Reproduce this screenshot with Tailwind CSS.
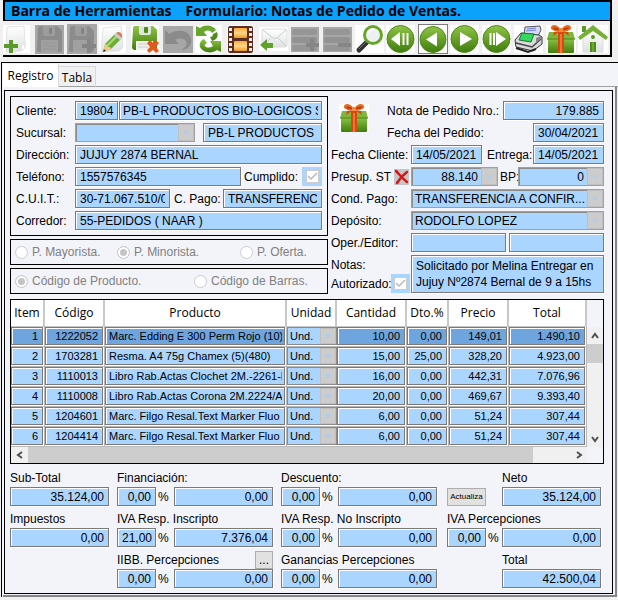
<!DOCTYPE html>
<html lang="es">
<head>
  <meta charset="UTF-8">
  <meta name="viewport" content="width=device-width, initial-scale=1.0">
  <title>Notas de Pedido de Ventas</title>
  <script src="https://cdn.jsdelivr.net/npm/@tailwindcss/browser@4"></script>
</head>
<body class="bg-[#f0f0f0] font-['Liberation_Sans',Arial,sans-serif] text-[12px] leading-4 text-black">

  <!-- Shared shapes -->
  <svg class="absolute size-0" aria-hidden="true">
    <defs>
      <linearGradient id="green" x1="0" y1="0" x2="0" y2="1">
        <stop offset="0" stop-color="#8fc447"/><stop offset="1" stop-color="#3f7d0c"/>
      </linearGradient>
      <linearGradient id="paper" x1="0" y1="0" x2="0" y2="1">
        <stop offset="0" stop-color="#ffffff"/><stop offset="1" stop-color="#dfe2e2"/>
      </linearGradient>
      <linearGradient id="orange" x1="0" y1="0" x2="0" y2="1">
        <stop offset="0" stop-color="#f9a93a"/><stop offset="0.5" stop-color="#ffd98a"/><stop offset="1" stop-color="#ee9a25"/>
      </linearGradient>
      <symbol id="gift" viewBox="0 0 30 30">
        <rect x="0" y="1" width="30" height="28" fill="#fff"/>
        <rect x="2" y="14" width="26" height="15" rx="1" fill="url(#green)"/>
        <path d="M3 8h24l2 7H1z" fill="#7db83c"/>
        <path d="M1 15h28" stroke="#4d8414"/>
        <rect x="12" y="8" width="6" height="21" fill="#d8480f"/>
        <rect x="14" y="10" width="2" height="19" fill="#f0743a"/>
        <path d="M15 6C12 0 6 0 5 3c-1 3 4 5 10 4 6 1 11-1 10-4-1-3-7-3-10 3z" fill="#ea6a22"/>
        <path d="M14 6c-2-2-5-3-7-2 1 2 4 2 7 2zM16 6c2-2 5-3 7-2-1 2-4 2-7 2z" fill="#b53a08"/>
        <path d="M14 7l-7 5 1-4zM16 7l7 5-1-4z" fill="#d8480f"/>
        <rect x="13" y="4" width="4" height="4" rx="1" fill="#f58a3c"/>
      </symbol>
    </defs>
  </svg>

  <!-- Toolbar -->
  <header class="ml-[3px] mr-[6px] mb-[5px] border-2 border-black">
    <h1 class="flex h-[18px] gap-3.5 bg-[#0aa2fa] pl-1.5 font-['Open_Sans',sans-serif] text-[14px] leading-[17px] font-bold whitespace-nowrap">
      <span>Barra de Herramientas</span>
      <span>Formulario: Notas de Pedido de Ventas.</span>
    </h1>
    <div class="-ml-0.5 flex h-[35px] border-t border-black bg-[#f0f0f0] pt-px">
      <button type="button" aria-label="Nuevo" class="flex-1">
        <svg class="size-[30px]" viewBox="0 0 30 30"><rect y="1" width="27" height="28" fill="#fff"/><path d="M4 3l17-1 1 19c0 3-1 5-4 6L3 28z" fill="url(#paper)" stroke="#e3e5e5"/><path d="M22 20c-2 0-4 1-4 7 3-1 4-3 4-7z" fill="#fff" stroke="#ccc" stroke-width=".5"/><path d="M6 16h4v4h5v4h-5v5H6v-5H1v-4h5z" fill="#5a9a2c"/></svg>
      </button>
      <button type="button" aria-label="Guardar" disabled class="flex-1">
        <svg class="size-[30px]" viewBox="0 0 30 30"><rect y="1" width="29" height="29" fill="#a7a7a7"/><path d="M3 4q0-2 2-2h17l5 5v19q0 2-2 2H4q-2 0-2-2z" fill="#8c8c8c"/><path d="M8 2h12v8q0 2-2 2h-8q-2 0-2-2z" fill="#9d9d9d"/><rect x="14" y="4" width="3" height="6" rx="1" fill="#828282"/><path d="M6 16h17v12H6z" fill="#a0a0a0"/><path d="M8 19h13M8 22h13M8 25h13" stroke="#979797"/></svg>
      </button>
      <button type="button" aria-label="Guardar y agregar" disabled class="flex-1">
        <svg class="size-[30px]" viewBox="0 0 30 30"><rect width="30" height="30" fill="#a7a7a7"/><path d="M3 4q0-2 2-2h17l5 5v19q0 2-2 2H4q-2 0-2-2z" fill="#8c8c8c"/><path d="M8 2h12v8q0 2-2 2h-8q-2 0-2-2z" fill="#9d9d9d"/><rect x="14" y="4" width="3" height="6" rx="1" fill="#828282"/><path d="M6 16h17v12H6z" fill="#a0a0a0"/><path d="M20 15h4v5h5v4h-5v5h-4v-5h-5v-4h5z" fill="#858585"/></svg>
      </button>
      <button type="button" aria-label="Editar" class="flex-1">
        <svg class="size-[30px]" viewBox="0 0 30 30"><rect y="1" width="27" height="28" fill="#fff"/><path d="M4 4l18-2 2 19c0 3-2 5-4 6L2 28z" fill="url(#paper)" stroke="#e3e5e5"/><path d="M4 28l2-8 10-10 6 5-10 10z" fill="#6fae35"/><path d="M8 22L18 12" stroke="#a9d97a" stroke-width="2"/><path d="M4 28l2-8 2 1 1 2 2 0 1 2z" fill="#f3c98f"/><path d="M4 28l1-3 2 2z" fill="#333"/><path d="M15 11l2-2 6 5-2 2z" fill="#c9ced0"/><path d="M17 9q2-2 5 0 2 2 1 5z" fill="#d97a5a"/></svg>
      </button>
      <button type="button" aria-label="Borrar" class="flex-1">
        <svg class="size-[30px]" viewBox="0 0 30 30"><rect y="1" width="28" height="28" fill="#fff"/><path d="M2 4q0-2 2-2h18l4 4v18q0 2-2 2H4q-3 0-3-3z" fill="url(#green)"/><path d="M8 2h12v7q0 2-2 2h-8q-2 0-2-2z" fill="#dfe5da"/><rect x="13" y="3" width="4" height="6" rx="1" fill="#4c8a16"/><path d="M5 17h17v9H5z" fill="#f1f3ef"/><path d="M7 20h10M7 23h10" stroke="#ccc"/><path d="M16 19l3-3 3 3 3-3 3 3-3 4 3 4-3 2-3-3-4 3-2-3 3-3z" fill="#e2591b"/></svg>
      </button>
      <button type="button" aria-label="Deshacer" disabled class="flex-1">
        <svg class="size-[30px]" viewBox="0 0 30 30"><rect y="2" width="30" height="27" fill="#a7a7a7"/><path d="M2 6l4 4c7-5 20-5 22 5 1 6-3 11-10 11 6-3 7-7 4-10-3-2-7-2-10 0l4 4H2z" fill="#8b8b8b"/></svg>
      </button>
      <button type="button" aria-label="Actualizar" class="flex-1">
        <svg class="size-[30px]" viewBox="0 0 30 30"><rect y="1" width="27" height="28" fill="#fff"/><path d="M1 2l4 2c5-4 13-3 16 2l-4 3c-2-3-5-3-8-1l3 4H1z" fill="#67a82c"/><path d="M22 8c2 5-1 8-5 9l-2-4c2 0 3-1 3-3z" fill="#4d8c18"/><path d="M26 28l-4-2c-5 4-14 3-17-3-1-4 1-7 4-8l3 4c-2 1-3 2-2 3 2 2 5 2 8 0l-3-5h11z" fill="url(#green)"/></svg>
      </button>
      <button type="button" aria-label="Película" class="flex-1">
        <svg class="size-[30px]" viewBox="0 0 30 30"><rect y="1" width="27" height="28" fill="#fff"/><rect x="1" y="2" width="25" height="27" rx="2" fill="#5c2e22"/><rect x="7" y="4" width="13" height="10" rx="1" fill="url(#orange)"/><rect x="7" y="17" width="13" height="10" rx="1" fill="url(#orange)"/><path d="M3.500 4v24M23.500 4v24" stroke="#f3ebe6" stroke-width="3" stroke-dasharray="3 2"/></svg>
      </button>
      <button type="button" aria-label="Enviar correo" class="flex-1">
        <svg class="size-[30px]" viewBox="0 0 30 30"><rect y="3" width="29" height="24" fill="#fff"/><rect x="3" y="5" width="25" height="18" rx="2" fill="url(#paper)" stroke="#dcdcdc"/><path d="M4 6l10 8q2 1 4 0l9-8M4 22l8-8M27 22l-8-8" fill="none" stroke="#c8cccc"/><path d="M1 21l7-6v4h6v5H8v3z" fill="#5fa32c"/></svg>
      </button>
      <button type="button" aria-label="Agregar fila" disabled class="flex-1">
        <svg class="size-[30px]" viewBox="0 0 30 30"><rect y="3" width="28" height="25" fill="#a7a7a7"/><rect x="1" y="5" width="25" height="6" rx="2" fill="#969696"/><rect x="1" y="13" width="25" height="6" rx="2" fill="#929292"/><rect x="1" y="21" width="25" height="6" rx="2" fill="#969696"/><path d="M19 15h4v4h5v4h-5v4h-4v-4h-4v-4h4z" fill="#868686"/></svg>
      </button>
      <button type="button" aria-label="Quitar fila" disabled class="flex-1">
        <svg class="size-[30px]" viewBox="0 0 30 30"><rect y="3" width="29" height="25" fill="#a7a7a7"/><rect x="1" y="5" width="26" height="6" rx="2" fill="#969696"/><rect x="1" y="13" width="26" height="6" rx="2" fill="#929292"/><rect x="1" y="21" width="26" height="6" rx="2" fill="#969696"/><rect x="15" y="19" width="13" height="4" fill="#868686"/></svg>
      </button>
      <button type="button" aria-label="Buscar" class="flex-1">
        <svg class="size-[30px]" viewBox="0 0 30 30"><rect x="1" y="1" width="29" height="28" fill="#fff"/><path d="M5 26l8-8" stroke="#2d2f31" stroke-width="5" stroke-linecap="round"/><path d="M5 25l7-7" stroke="#777" stroke-width="1"/><circle cx="19" cy="11" r="8.500" fill="#eef1f1" stroke="#68a62a" stroke-width="3"/><path d="M14 9q2-4 6-4" fill="none" stroke="#fff" stroke-width="2"/></svg>
      </button>
      <button type="button" aria-label="Primero" class="flex-1">
        <svg class="size-[30px]" viewBox="0 0 30 30"><rect y="1" width="29" height="28" fill="#fff"/><circle cx="14.500" cy="15" r="13.500" fill="url(#green)" stroke="#4b8a15"/><path d="M5 15l9-7v14z" fill="#fff"/><path d="M17.500 9v12M21.500 9v12" stroke="#fff" stroke-width="2"/></svg>
      </button>
      <button type="button" aria-label="Anterior" class="flex-1">
        <svg class="size-[30px]" viewBox="0 0 30 30"><rect x=".5" y=".5" width="29" height="29" fill="#fff" stroke="#000" stroke-dasharray="1 1"/><circle cx="15" cy="15.500" r="13" fill="url(#green)" stroke="#4b8a15"/><path d="M8 15.500l11-7v14z" fill="#fff"/></svg>
      </button>
      <button type="button" aria-label="Siguiente" class="flex-1">
        <svg class="size-[30px]" viewBox="0 0 30 30"><rect y="1" width="29" height="28" fill="#fff"/><circle cx="14.500" cy="15" r="13.500" fill="url(#green)" stroke="#4b8a15"/><path d="M22 15l-12-7v14z" fill="#fff"/></svg>
      </button>
      <button type="button" aria-label="Último" class="flex-1">
        <svg class="size-[30px]" viewBox="0 0 30 30"><rect y="1" width="29" height="28" fill="#fff"/><circle cx="14.500" cy="15" r="13.500" fill="url(#green)" stroke="#4b8a15"/><path d="M24 15l-10-7v14z" fill="#fff"/><path d="M8.500 9v12M12 9v12" stroke="#fff" stroke-width="2"/></svg>
      </button>
      <button type="button" aria-label="Imprimir" class="flex-1">
        <svg class="size-[30px]" viewBox="0 0 30 30"><rect y="1" width="29" height="28" fill="#fff"/><path d="M11 3l15-1 1 4-3 6-14-1z" fill="#d5daf8" stroke="#555"/><path d="M13 5l9-1M12 7l10-1" stroke="#6f7fe0"/><path d="M1 16l6-7 18 2 3 2v7l-9 7-17-4z" fill="#d9dadd" stroke="#333"/><path d="M8 9l12 1-3 8-12-2z" fill="#38d860" stroke="#167a2c"/><path d="M2 19l16 4 9-8" fill="none" stroke="#444" stroke-width="1.500"/><path d="M2 24l12 4 8-3" fill="none" stroke="#222" stroke-width="2"/><path d="M22 14l5-2v3l-5 4z" fill="#888"/></svg>
      </button>
      <button type="button" aria-label="Regalo" class="flex-1">
        <svg class="size-[30px]"><use href="#gift"/></svg>
      </button>
      <button type="button" aria-label="Inicio" class="flex-1">
        <svg class="size-[30px]" viewBox="0 0 30 30"><rect y="1" width="30" height="28" fill="#fff"/><path d="M4 2h4v6H4z" fill="#5b9a24"/><path d="M5 14L15 5l10 9v14H5z" fill="url(#paper)" stroke="#dcdcdc"/><path d="M15 1l15 12-2 3L15 7 2 16l-2-3z" fill="#74b135"/><circle cx="15" cy="13" r="2" fill="#5b9a24"/><path d="M12 18h6v10h-6z" fill="#4f8d19"/><path d="M15 18v10" stroke="#8cc152"/></svg>
      </button>
    </div>
  </header>

  <div class="ml-px border-t border-l border-black bg-[#f3f4f9] pl-px pt-px">
    <!-- Tabs -->
    <div role="tablist" class="flex h-[23px] items-end font-['Open_Sans',sans-serif]">
      <button type="button" role="tab" aria-selected="true" class="h-[23px] w-14 border-r border-[#d9d9d9] bg-white">Registro</button>
      <button type="button" role="tab" aria-selected="false" class="h-[21px] w-[37px] border-t border-r border-b border-[#d9d9d9] border-b-[#a0a0a0] bg-[#f0f0f0] pt-0.5">Tabla</button>
      <div class="flex-1 border-b border-[#a0a0a0]"></div>
    </div>

    <div class="mr-px border-r-2 border-b-2 border-[#858585] pt-[3px] pr-0.5 pb-px pl-px">
      <form class="border border-black pt-[5px] pr-2 pb-[5px] pl-[5px]">
        <div class="grid grid-cols-[318fr_273fr] gap-[3px]">

          <!-- Left side: customer -->
          <div class="flex min-w-0 flex-col gap-[3px]">
            <div class="flex flex-col gap-[3px] border border-black px-[5px] pt-1 pb-[5px]">
              <div class="flex items-center">
                <label for="cliente" class="w-[59px] shrink-0">Cliente:</label>
                <input id="cliente" type="text" value="19804" class="mr-px h-[19px] w-[43px] shrink-0 border border-[#7a7a7a] bg-[#aad5ff] pl-1 shadow-[inset_1px_1px_0_#fff,1px_1px_0_#fff]">
                <input type="text" aria-label="Nombre del cliente" value="PB-L PRODUCTOS BIO-LOGICOS S.A." class="h-[19px] w-0 flex-1 border border-[#7a7a7a] bg-[#aad5ff] px-[3px] shadow-[inset_1px_1px_0_#fff,1px_1px_0_#fff]">
              </div>
              <div class="flex items-center">
                <label for="sucursal" class="w-[59px] shrink-0">Sucursal:</label>
                <div class="relative mr-2 w-[120px] shrink-0">
                  <select id="sucursal" class="block h-[19px] w-full appearance-none border border-[#a0a0a0] bg-[#aad5ff] pl-1 shadow-[inset_1px_1px_0_#8c8c8c]"><option></option></select>
                  <span class="pointer-events-none absolute inset-y-px right-px flex w-4 items-center justify-center border border-[#bfbfbf] bg-[#cccccc]"><svg class="h-1 w-2" viewBox="0 0 8 4"><path d="M0 0h8L4 4z" fill="#b3cde6"/></svg></span>
                </div>
                <input type="text" aria-label="Nombre de la sucursal" value="PB-L PRODUCTOS" class="h-[19px] w-0 flex-1 border border-[#7a7a7a] bg-[#aad5ff] px-1 shadow-[inset_1px_1px_0_#fff,1px_1px_0_#fff]">
              </div>
              <div class="flex items-center">
                <label for="direccion" class="w-[59px] shrink-0">Dirección:</label>
                <input id="direccion" type="text" value="JUJUY 2874 BERNAL" class="h-[19px] w-0 flex-1 border border-[#7a7a7a] bg-[#aad5ff] px-1 shadow-[inset_1px_1px_0_#fff,1px_1px_0_#fff]">
              </div>
              <div class="flex items-center">
                <label for="telefono" class="w-[59px] shrink-0">Teléfono:</label>
                <input id="telefono" type="text" value="1557576345" class="h-[19px] w-0 flex-1 border border-[#7a7a7a] bg-[#aad5ff] px-1 shadow-[inset_1px_1px_0_#fff,1px_1px_0_#fff]">
                <label for="cumplido" class="w-[61px] shrink-0 pl-[3px]">Cumplido:</label>
                <span class="grid h-[19px] w-5 shrink-0 place-items-center bg-[#aad5ff]">
                  <input id="cumplido" type="checkbox" checked class="col-start-1 row-start-1 size-[13px] appearance-none border border-[#cccccc] bg-white">
                  <svg class="pointer-events-none col-start-1 row-start-1 size-[11px]" viewBox="0 0 11 11"><path d="M1 5l3 3 6-6" fill="none" stroke="#b8b8b8" stroke-width="1.500"/></svg>
                </span>
              </div>
              <div class="flex items-center">
                <label for="cuit" class="w-[59px] shrink-0">C.U.I.T.:</label>
                <input id="cuit" type="text" value="30-71.067.510/0" class="h-[19px] w-[95px] shrink-0 border border-[#7a7a7a] bg-[#aad5ff] px-1 shadow-[inset_1px_1px_0_#fff,1px_1px_0_#fff]">
                <label for="cpago" class="w-[53px] shrink-0 pl-1">C. Pago:</label>
                <input id="cpago" type="text" value="TRANSFERENCIA" class="h-[19px] w-0 flex-1 border border-[#7a7a7a] bg-[#aad5ff] px-1 shadow-[inset_1px_1px_0_#fff,1px_1px_0_#fff]">
              </div>
              <div class="flex items-center">
                <label for="corredor" class="w-[59px] shrink-0">Corredor:</label>
                <input id="corredor" type="text" value="55-PEDIDOS ( NAAR )" class="h-[19px] w-0 flex-1 border border-[#7a7a7a] bg-[#aad5ff] px-1 shadow-[inset_1px_1px_0_#fff,1px_1px_0_#fff]">
              </div>
            </div>

            <div class="grid h-[26px] grid-cols-[102fr_123fr_87fr] items-center border border-black pl-1 text-[#808080]">
              <label class="flex items-center gap-1"><input type="radio" name="precio" class="size-[13px] appearance-none rounded-full border border-[#cccccc] bg-white">P. Mayorista.</label>
              <label class="flex items-center gap-1"><input type="radio" name="precio" checked class="size-[13px] appearance-none rounded-full border border-[#cccccc] bg-[#c4c4c4] shadow-[inset_0_0_0_2px_#fff]">P. Minorista.</label>
              <label class="flex items-center gap-1"><input type="radio" name="precio" class="size-[13px] appearance-none rounded-full border border-[#cccccc] bg-white">P. Oferta.</label>
            </div>
            <div class="grid h-[26px] grid-cols-[179fr_133fr] items-center border border-black pl-1 text-[#808080]">
              <label class="flex items-center gap-1"><input type="radio" name="codigo" checked class="size-[13px] appearance-none rounded-full border border-[#cccccc] bg-[#c4c4c4] shadow-[inset_0_0_0_2px_#fff]">Código de Producto.</label>
              <label class="flex items-center gap-1"><input type="radio" name="codigo" class="size-[13px] appearance-none rounded-full border border-[#cccccc] bg-white">Código de Barras.</label>
            </div>
          </div>

          <!-- Right side: order -->
          <div class="flex min-w-0 flex-col gap-[3px] pt-[5px]">
            <div class="flex">
              <div class="w-14 shrink-0 pt-0.5 pl-2"><svg class="size-[30px]"><use href="#gift"/></svg></div>
              <div class="flex flex-1 flex-col gap-[3px]">
                <div class="flex items-center justify-between">
                  <label for="nota">Nota de Pedido Nro.:</label>
                  <input id="nota" type="text" value="179.885" class="h-[19px] w-[101px] border border-[#7a7a7a] bg-[#aad5ff] px-1 text-right shadow-[inset_1px_1px_0_#fff,1px_1px_0_#fff]">
                </div>
                <div class="flex items-center justify-between">
                  <label for="fecha">Fecha del Pedido:</label>
                  <input id="fecha" type="text" value="30/04/2021" class="h-[19px] w-[71px] border border-[#7a7a7a] bg-[#aad5ff] pl-1 shadow-[inset_1px_1px_0_#fff,1px_1px_0_#fff]">
                </div>
              </div>
            </div>
            <div class="flex items-center">
              <label for="fcliente" class="w-20 shrink-0">Fecha Cliente:</label>
              <input id="fcliente" type="text" value="14/05/2021" class="h-[19px] w-[71px] border border-[#7a7a7a] bg-[#aad5ff] pl-1 shadow-[inset_1px_1px_0_#fff,1px_1px_0_#fff]">
              <label for="entrega" class="ml-auto w-[46px] shrink-0">Entrega:</label>
              <input id="entrega" type="text" value="14/05/2021" class="h-[19px] w-[71px] border border-[#7a7a7a] bg-[#aad5ff] pl-1 shadow-[inset_1px_1px_0_#fff,1px_1px_0_#fff]">
            </div>
            <div class="flex items-center">
              <label for="presup" class="w-[63px] shrink-0">Presup. ST</label>
              <button type="button" aria-label="Quitar presupuesto" class="mr-0.5 h-4 w-[15px] shrink-0 bg-[#c6c6c6]">
                <svg class="h-4 w-[15px]" viewBox="0 0 15 16"><path d="M2 2c3 3 7 8 11 11M13 3C9 6 6 9 3 14" fill="none" stroke="#d01818" stroke-width="2.500" stroke-linecap="round"/></svg>
              </button>
              <div class="relative w-[87px] shrink-0">
                <select id="presup" class="block h-[19px] w-full appearance-none border border-[#a0a0a0] bg-[#aad5ff] pr-[19px] pl-1 text-right shadow-[inset_1px_1px_0_#8c8c8c]"><option>88.140</option></select>
                <span class="pointer-events-none absolute inset-y-px right-px flex w-4 items-center justify-center border border-[#bfbfbf] bg-[#cccccc]"><svg class="h-1 w-2" viewBox="0 0 8 4"><path d="M0 0h8L4 4z" fill="#b3cde6"/></svg></span>
              </div>
              <label for="bp" class="w-5 shrink-0 pl-0.5">BP:</label>
              <div class="relative flex-1">
                <select id="bp" class="block h-[19px] w-full appearance-none border border-[#a0a0a0] bg-[#aad5ff] pr-[19px] pl-1 text-right shadow-[inset_1px_1px_0_#8c8c8c]"><option>0</option></select>
                <span class="pointer-events-none absolute inset-y-px right-px flex w-4 items-center justify-center border border-[#bfbfbf] bg-[#cccccc]"><svg class="h-1 w-2" viewBox="0 0 8 4"><path d="M0 0h8L4 4z" fill="#b3cde6"/></svg></span>
              </div>
            </div>
            <div class="flex items-center">
              <label for="cond" class="w-20 shrink-0">Cond. Pago:</label>
              <div class="relative flex-1">
                <select id="cond" class="block h-[19px] w-full appearance-none border border-[#a0a0a0] bg-[#aad5ff] pl-[3px] shadow-[inset_1px_1px_0_#8c8c8c]"><option>TRANSFERENCIA A CONFIR...</option></select>
                <span class="pointer-events-none absolute inset-y-px right-px flex w-4 items-center justify-center border border-[#bfbfbf] bg-[#cccccc]"><svg class="h-1 w-2" viewBox="0 0 8 4"><path d="M0 0h8L4 4z" fill="#b3cde6"/></svg></span>
              </div>
            </div>
            <div class="flex items-center">
              <label for="deposito" class="w-20 shrink-0">Depósito:</label>
              <div class="relative flex-1">
                <select id="deposito" class="block h-[19px] w-full appearance-none border border-[#a0a0a0] bg-[#aad5ff] pl-[3px] shadow-[inset_1px_1px_0_#8c8c8c]"><option>RODOLFO LOPEZ</option></select>
                <span class="pointer-events-none absolute inset-y-px right-px flex w-4 items-center justify-center border border-[#bfbfbf] bg-[#cccccc]"><svg class="h-1 w-2" viewBox="0 0 8 4"><path d="M0 0h8L4 4z" fill="#b3cde6"/></svg></span>
              </div>
            </div>
            <div class="flex items-center">
              <label for="oper" class="w-20 shrink-0">Oper./Editor:</label>
              <input id="oper" type="text" class="mr-[3px] h-[19px] w-0 flex-1 border border-[#7a7a7a] bg-[#aad5ff] px-1 shadow-[inset_1px_1px_0_#fff,1px_1px_0_#fff]">
              <input type="text" aria-label="Editor" class="h-[19px] w-0 flex-1 border border-[#7a7a7a] bg-[#aad5ff] px-1 shadow-[inset_1px_1px_0_#fff,1px_1px_0_#fff]">
            </div>
            <div class="flex">
              <div class="flex w-20 shrink-0 flex-col justify-between">
                <label for="notas" class="pt-0.5">Notas:</label>
                <div class="flex items-center">
                  <label for="autorizado" class="w-[60px]">Autorizado:</label>
                  <span class="grid h-[19px] w-[19px] shrink-0 place-items-center bg-[#aad5ff]">
                    <input id="autorizado" type="checkbox" checked class="col-start-1 row-start-1 size-[13px] appearance-none border border-[#cccccc] bg-white">
                    <svg class="pointer-events-none col-start-1 row-start-1 size-[11px]" viewBox="0 0 11 11"><path d="M1 5l3 3 6-6" fill="none" stroke="#b8b8b8" stroke-width="1.500"/></svg>
                  </span>
                </div>
              </div>
              <textarea id="notas" rows="2" class="h-[38px] w-0 flex-1 resize-none overflow-hidden border border-[#7a7a7a] bg-[#aad5ff] px-1 pt-0.5 shadow-[inset_1px_1px_0_#fff,1px_1px_0_#fff]">Solicitado por Melina Entregar en
Jujuy Nº2874 Bernal de 9 a 15hs</textarea>
            </div>
          </div>
        </div>

        <!-- Items grid -->
        <div class="mt-[5px] border border-black">
          <div class="flex">
            <table class="w-0 flex-1 table-fixed border-separate border-spacing-0">
              <colgroup>
                <col class="w-[34px]"><col class="w-[60px]"><col class="w-[182px]"><col class="w-[50px]"><col class="w-[70px]"><col class="w-[42px]"><col class="w-[60px]"><col class="w-[78px]">
              </colgroup>
              <thead class="bg-white font-['Open_Sans',sans-serif]">
                <tr class="h-[27px]">
                  <th class="border-r-2 border-b border-[#c8c8c8] p-0 font-normal">Item</th>
                  <th class="border-r-2 border-b border-[#c8c8c8] p-0 font-normal">Código</th>
                  <th class="border-r-2 border-b border-[#c8c8c8] p-0 font-normal">Producto</th>
                  <th class="border-r-2 border-b border-[#c8c8c8] p-0 font-normal">Unidad</th>
                  <th class="border-r-2 border-b border-[#c8c8c8] p-0 font-normal">Cantidad</th>
                  <th class="border-r-2 border-b border-[#c8c8c8] p-0 font-normal">Dto.%</th>
                  <th class="border-r-2 border-b border-[#c8c8c8] p-0 font-normal">Precio</th>
                  <th class="border-r-2 border-b border-[#c8c8c8] p-0 font-normal">Total</th>
                </tr>
              </thead>
              <tbody id="items" class="bg-white text-[11px]"></tbody>
            </table>
            <!-- Vertical scrollbar -->
            <div class="flex w-4 flex-col pt-[27px]">
              <button type="button" aria-label="Subir" class="grid h-[17px] place-items-center bg-[#f0f0f0]"><svg class="size-2" viewBox="0 0 8 8"><path d="M1 6l3-4 3 4" fill="none" stroke="#505050" stroke-width="2"/></svg></button>
              <div class="h-[19px] bg-[#cdcdcd]"></div>
              <div class="flex-1 bg-[#f0f0f0]"></div>
              <button type="button" aria-label="Bajar" class="grid h-[17px] place-items-center bg-[#f0f0f0]"><svg class="size-2" viewBox="0 0 8 8"><path d="M1 2l3 4 3-4" fill="none" stroke="#505050" stroke-width="2"/></svg></button>
            </div>
          </div>
          <!-- Horizontal scrollbar -->
          <div class="mr-4 flex h-4 bg-[#f0f0f0]">
            <button type="button" aria-label="Izquierda" class="grid w-[17px] place-items-center"><svg class="size-2" viewBox="0 0 8 8"><path d="M6 1L2 4l4 3" fill="none" stroke="#505050" stroke-width="2"/></svg></button>
            <div class="grid flex-1 grid-cols-[504fr_37fr]"><div class="bg-[#cdcdcd]"></div></div>
            <button type="button" aria-label="Derecha" class="grid w-[17px] place-items-center"><svg class="size-2" viewBox="0 0 8 8"><path d="M2 1l4 3-4 3" fill="none" stroke="#505050" stroke-width="2"/></svg></button>
          </div>
        </div>

        <!-- Totals -->
        <div class="mt-[6px] mr-[3px] grid grid-cols-[99fr_156fr_156fr_156fr] gap-x-2 gap-y-[5px]">
          <div>
            <label for="subtotal" class="block h-[17px]">Sub-Total</label>
            <input id="subtotal" type="text" value="35.124,00" class="h-[19px] w-full border border-[#7a7a7a] bg-[#aad5ff] px-1 text-right shadow-[inset_1px_1px_0_#fff,1px_1px_0_#fff]">
          </div>
          <div>
            <label for="financ" class="block h-[17px]">Financiación:</label>
            <div class="flex items-center">
              <input id="financ" type="text" value="0,00" class="h-[19px] w-[39px] border border-[#7a7a7a] bg-[#aad5ff] px-1 text-right shadow-[inset_1px_1px_0_#fff,1px_1px_0_#fff]">
              <span class="w-[18px] pl-0.5">%</span>
              <input type="text" aria-label="Importe financiación" value="0,00" class="h-[19px] w-0 flex-1 border border-[#7a7a7a] bg-[#aad5ff] px-1 text-right shadow-[inset_1px_1px_0_#fff,1px_1px_0_#fff]">
            </div>
          </div>
          <div>
            <label for="descuento" class="block h-[17px]">Descuento:</label>
            <div class="flex items-center">
              <input id="descuento" type="text" value="0,00" class="h-[19px] w-[39px] border border-[#7a7a7a] bg-[#aad5ff] px-1 text-right shadow-[inset_1px_1px_0_#fff,1px_1px_0_#fff]">
              <span class="w-[18px] pl-0.5">%</span>
              <input type="text" aria-label="Importe descuento" value="0,00" class="h-[19px] w-0 flex-1 border border-[#7a7a7a] bg-[#aad5ff] px-1 text-right shadow-[inset_1px_1px_0_#fff,1px_1px_0_#fff]">
            </div>
          </div>
          <div class="flex items-end pl-0.5">
            <button type="button" class="mr-4 h-[18px] w-[39px] border border-[#adadad] bg-[#e1e1e1] text-[8px]">Actualiza</button>
            <div class="flex-1">
              <label for="neto" class="block h-[17px]">Neto</label>
              <input id="neto" type="text" value="35.124,00" class="block h-[19px] w-full border border-[#7a7a7a] bg-[#aad5ff] px-1 text-right shadow-[inset_1px_1px_0_#fff,1px_1px_0_#fff]">
            </div>
          </div>

          <div>
            <label for="impuestos" class="block h-[17px]">Impuestos</label>
            <input id="impuestos" type="text" value="0,00" class="h-[19px] w-full border border-[#7a7a7a] bg-[#aad5ff] px-1 text-right shadow-[inset_1px_1px_0_#fff,1px_1px_0_#fff]">
          </div>
          <div>
            <label for="ivari" class="block h-[17px]">IVA Resp. Inscripto</label>
            <div class="flex items-center">
              <input id="ivari" type="text" value="21,00" class="h-[19px] w-[39px] border border-[#7a7a7a] bg-[#aad5ff] px-[3px] text-right shadow-[inset_1px_1px_0_#fff,1px_1px_0_#fff]">
              <span class="w-[18px] pl-0.5">%</span>
              <input type="text" aria-label="Importe IVA inscripto" value="7.376,04" class="h-[19px] w-0 flex-1 border border-[#7a7a7a] bg-[#aad5ff] px-1 text-right shadow-[inset_1px_1px_0_#fff,1px_1px_0_#fff]">
            </div>
          </div>
          <div>
            <label for="ivani" class="block h-[17px]">IVA Resp. No Inscripto</label>
            <div class="flex items-center">
              <input id="ivani" type="text" value="0,00" class="h-[19px] w-[39px] border border-[#7a7a7a] bg-[#aad5ff] px-1 text-right shadow-[inset_1px_1px_0_#fff,1px_1px_0_#fff]">
              <span class="w-[18px] pl-0.5">%</span>
              <input type="text" aria-label="Importe IVA no inscripto" value="0,00" class="h-[19px] w-0 flex-1 border border-[#7a7a7a] bg-[#aad5ff] px-1 text-right shadow-[inset_1px_1px_0_#fff,1px_1px_0_#fff]">
            </div>
          </div>
          <div class="pl-0.5">
            <label for="ivaperc" class="block h-[17px]">IVA Percepciones</label>
            <div class="flex items-center">
              <input id="ivaperc" type="text" value="0,00" class="h-[19px] w-[39px] border border-[#7a7a7a] bg-[#aad5ff] px-1 text-right shadow-[inset_1px_1px_0_#fff,1px_1px_0_#fff]">
              <span class="w-4 pl-0.5">%</span>
              <input type="text" aria-label="Importe IVA percepciones" value="0,00" class="h-[19px] w-0 flex-1 border border-[#7a7a7a] bg-[#aad5ff] px-1 text-right shadow-[inset_1px_1px_0_#fff,1px_1px_0_#fff]">
            </div>
          </div>

          <div class="col-start-2">
            <div class="flex h-[17px] items-end justify-between">
              <label for="iibb" class="h-[17px]">IIBB. Percepciones</label>
              <button type="button" class="h-[18px] w-[18px] border border-[#adadad] bg-[#e1e1e1]">...</button>
            </div>
            <div class="flex items-center">
              <input id="iibb" type="text" value="0,00" class="h-[19px] w-[39px] border border-[#7a7a7a] bg-[#aad5ff] px-1 text-right shadow-[inset_1px_1px_0_#fff,1px_1px_0_#fff]">
              <span class="w-[18px] pl-0.5">%</span>
              <input type="text" aria-label="Importe IIBB" value="0,00" class="h-[19px] w-0 flex-1 border border-[#7a7a7a] bg-[#aad5ff] px-1 text-right shadow-[inset_1px_1px_0_#fff,1px_1px_0_#fff]">
            </div>
          </div>
          <div>
            <label for="ganancias" class="block h-[17px]">Ganancias Percepciones</label>
            <div class="flex items-center">
              <input id="ganancias" type="text" value="0,00" class="h-[19px] w-[39px] border border-[#7a7a7a] bg-[#aad5ff] px-1 text-right shadow-[inset_1px_1px_0_#fff,1px_1px_0_#fff]">
              <span class="w-[18px] pl-0.5">%</span>
              <input type="text" aria-label="Importe ganancias" value="0,00" class="h-[19px] w-0 flex-1 border border-[#7a7a7a] bg-[#aad5ff] px-1 text-right shadow-[inset_1px_1px_0_#fff,1px_1px_0_#fff]">
            </div>
          </div>
          <div class="pl-[57px]">
            <label for="total" class="block h-[17px]">Total</label>
            <input id="total" type="text" value="42.500,04" class="block h-[19px] w-full border border-[#7a7a7a] bg-[#aad5ff] px-1 text-right shadow-[inset_1px_1px_0_#fff,1px_1px_0_#fff]">
          </div>
        </div>
      </form>
    </div>
  </div>

  <script>
    const items = [
      ['1', '1222052', 'Marc. Edding E 300 Perm Rojo (10)', 'Und.', '10,00', '0,00', '149,01', '1.490,10'],
      ['2', '1703281', 'Resma. A4 75g Chamex (5)(480)', 'Und.', '15,00', '25,00', '328,20', '4.923,00'],
      ['3', '1110013', 'Libro Rab.Actas Clochet 2M.-2261-N', 'Und.', '16,00', '0,00', '442,31', '7.076,96'],
      ['4', '1110008', 'Libro Rab.Actas Corona 2M.2224/A-N', 'Und.', '20,00', '0,00', '469,67', '9.393,40'],
      ['5', '1204601', 'Marc. Filgo Resal.Text Marker Fluo Verde', 'Und.', '6,00', '0,00', '51,24', '307,44'],
      ['6', '1204414', 'Marc. Filgo Resal.Text Marker Fluo Amarillo', 'Und.', '6,00', '0,00', '51,24', '307,44']
    ];
    const names = ['Item', 'Código', 'Producto', 'Unidad', 'Cantidad', 'Dto.%', 'Precio', 'Total'];

    document.getElementById('items').innerHTML = items.map((item, row) => {
      const fill = row === 0 ? 'bg-[#6fa5df]' : 'bg-[#aad5ff]';
      const cells = item.map((value, col) => {
        if (col === 3) {
          return `<td class="border-b border-[#b8b8b8] p-0 pb-px"><div class="relative">
            <select aria-label="Unidad" class="block h-[18px] w-full appearance-none border border-[#8c8c8c] bg-[#aad5ff] pl-0.5"><option>${value}</option></select>
            <span class="pointer-events-none absolute inset-y-px right-px flex w-4 items-center justify-center border border-[#bfbfbf] bg-[#cccccc]"><svg class="h-1 w-2" viewBox="0 0 8 4"><path d="M0 0h8L4 4z" fill="#b3cde6"/></svg></span>
          </div></td>`;
        }
        const align = col === 2 ? 'pr-0.5 pl-[3px]' : 'px-1 text-right';
        return `<td class="border-r border-b border-[#b8b8b8] p-0 pr-px pb-px">
          <input type="text" aria-label="${names[col]}" value="${value}" class="block h-[18px] w-full border border-[#7a7a7a] ${fill} ${align} shadow-[inset_1px_1px_0_#fff]"></td>`;
      }).join('');
      return `<tr>${cells}</tr>`;
    }).join('');
  </script>
</body>
</html>
